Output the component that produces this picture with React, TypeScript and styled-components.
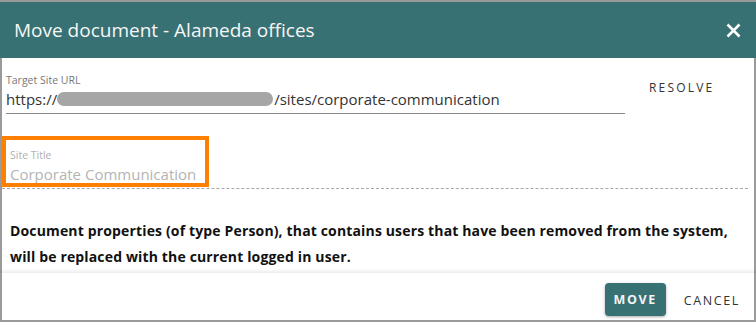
import React from "react";
import styled, { createGlobalStyle } from "styled-components";

const Global = createGlobalStyle`
  html, body { margin: 0; padding: 0; background: #fff; }
  body { font-family: "Open Sans", "Liberation Sans", sans-serif; }
`;

const teal = "#387174";

const Dialog = styled.div`
  width: 756px;
  height: 322px;
  box-sizing: border-box;
  display: flex;
  flex-direction: column;
  border-top: 2px solid #9a9a9a;
  background: #fff;
`;

const Header = styled.div`
  height: 56px;
  flex: none;
  background: ${teal};
  display: flex;
  align-items: center;
  justify-content: space-between;
  padding: 0 14px 0 14px;
  color: #fff;
`;

const Title = styled.h1`
  margin: 0;
  font-size: 19px;
  font-weight: 400;
  letter-spacing: 0px;
  color: #f6f6f6;
`;

const Close = styled.button`
  border: 0;
  background: transparent;
  padding: 0;
  width: 18px;
  height: 18px;
  display: flex;
  align-items: center;
  justify-content: center;
  cursor: pointer;
`;

const Body = styled.div`
  flex: 1;
  display: flex;
  flex-direction: column;
  border-left: 2px solid #9a9a9a;
  border-right: 2px solid #9a9a9a;
`;

const UrlRow = styled.div`
  display: flex;
  align-items: flex-start;
  padding: 15px 0 0 4px;
`;

const Field = styled.div<{ $dashed?: boolean }>`
  position: relative;
  display: flex;
  flex-direction: column;
  box-sizing: border-box;
  border-bottom: 1px ${p => (p.$dashed ? "dashed #a8a8a8" : "solid #8a8a8a")};
`;

const UrlField = styled(Field)`
  width: 619px;
  height: 41px;
`;

const Label = styled.label<{ $muted?: boolean }>`
  font-size: 10.5px;
  line-height: 14px;
  color: ${p => (p.$muted ? "#b0b0b0" : "#777")};
`;

const Value = styled.div<{ $muted?: boolean }>`
  font-size: 15px;
  line-height: 24px;
  color: ${p => (p.$muted ? "#b4b4b4" : "#333")};
  display: flex;
  align-items: center;
  white-space: nowrap;
`;

const Redacted = styled.span`
  display: inline-block;
  width: 216px;
  height: 14px;
  border-radius: 7px;
  background: #a6a6a6;
  margin: 0 1px 0 0;
`;

const Resolve = styled.button`
  margin: 6px 0 0 24px;
  border: 0;
  background: transparent;
  padding: 0;
  font-family: inherit;
  font-size: 12px;
  letter-spacing: 2.2px;
  color: #333;
  cursor: pointer;
`;

const TitleField = styled(Field)`
  margin: 22px 6px 0 0;
  height: 53px;
  padding: 12px 0 0 8px;
`;

const Highlight = styled.div`
  position: absolute;
  left: 0;
  top: 0;
  width: 207px;
  height: 51px;
  box-sizing: border-box;
  border: 4px solid #ff7f00;
  pointer-events: none;
`;

const Message = styled.p`
  margin: 29px 0 0 0;
  padding: 0 6px 0 8px;
  font-size: 14px;
  line-height: 26px;
  font-weight: 700;
  color: #111;
  letter-spacing: 0.15px;
`;

const Footer = styled.div`
  height: 47px;
  flex: none;
  display: flex;
  align-items: center;
  justify-content: flex-end;
  gap: 18px;
  padding: 0 14px 0 0;
  border-left: 2px solid #9a9a9a;
  border-right: 2px solid #9a9a9a;
  border-bottom: 2px solid #9a9a9a;
  box-shadow: 0 -2px 3px rgba(0, 0, 0, 0.08);
  position: relative;
`;

const Btn = styled.button<{ $primary?: boolean }>`
  font-family: inherit;
  font-size: 12.5px;
  letter-spacing: 1.6px;
  height: 33px;
  padding: 0 ${p => (p.$primary ? "9px" : "0")};
  border: 0;
  border-radius: 4px;
  background: ${p => (p.$primary ? teal : "transparent")};
  color: ${p => (p.$primary ? "#f4f4f4" : "#333")};
  font-weight: ${p => (p.$primary ? 700 : 400)};
  box-shadow: ${p => (p.$primary ? "0 1px 3px rgba(0,0,0,0.35)" : "none")};
  margin-top: ${p => (p.$primary ? "5px" : "8px")};
  cursor: pointer;
`;

export default function App() {
  return (
    <>
      <Global />
      <Dialog>
        <Header>
          <Title>Move document - Alameda offices</Title>
          <Close aria-label="Close">
            <svg width="15" height="15" viewBox="0 0 15 15">
              <path d="M1.5 1.5 L13.5 13.5 M13.5 1.5 L1.5 13.5" stroke="#fff" strokeWidth="2.6" strokeLinecap="butt" />
            </svg>
          </Close>
        </Header>
        <Body>
          <UrlRow>
            <UrlField>
              <Label>Target Site URL</Label>
              <Value>
                https://<Redacted />/sites/corporate-communication
              </Value>
            </UrlField>
            <Resolve>RESOLVE</Resolve>
          </UrlRow>
          <TitleField $dashed>
            <Label $muted>Site Title</Label>
            <Value $muted>Corporate Communication</Value>
            <Highlight />
          </TitleField>
          <Message>
            Document properties (of type Person), that contains users that have been removed from the system,
            will be replaced with the current logged in user.
          </Message>
        </Body>
        <Footer>
          <Btn $primary>MOVE</Btn>
          <Btn>CANCEL</Btn>
        </Footer>
      </Dialog>
    </>
  );
}
